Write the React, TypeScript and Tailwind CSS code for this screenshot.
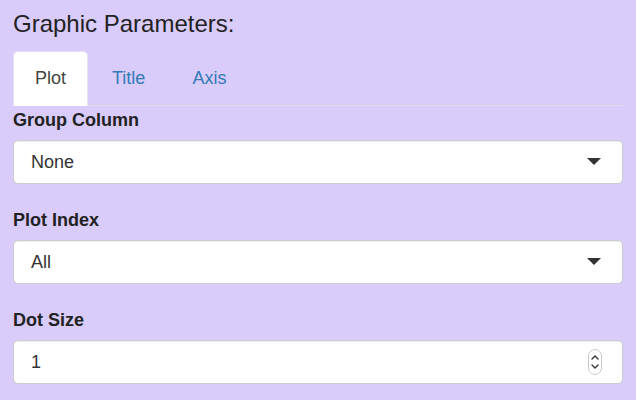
export default function App() {
  const tabs = ["Plot", "Title", "Axis"];

  const SelectBox = ({ value }: { value: string }) => (
    <div className="flex h-[44px] items-center justify-between rounded-[5px] border border-[#cccccc] bg-white pl-[17px] pr-[21px] text-[18px] text-[#333333] shadow-[inset_0_1px_1px_rgba(0,0,0,0.075)]">
      <span>{value}</span>
      <svg width="14" height="8" viewBox="0 0 14 8">
        <path d="M0 0 L14 0 L7 7 Z" fill="#333333" />
      </svg>
    </div>
  );

  return (
    <div className="h-[400px] w-[636px] overflow-hidden bg-[#d9ccfa] px-[13px] font-['Liberation_Sans',Arial,sans-serif] text-[#333333]">
      <div className="pt-[8px] text-[24px] leading-[32px] text-[#222222]">
        Graphic Parameters:
      </div>
      <ul className="mt-[11px] flex border-b border-[#dddddd]">
        {tabs.map((t, i) => (
          <li key={t} className="mr-[3px] -mb-px">
            <div
              className={
                i === 0
                  ? "flex h-[55px] items-center rounded-t-[5px] border border-b-transparent border-[#e6e0f5] bg-white px-[21px] text-[18px] text-[#444444]"
                  : "flex h-[55px] items-center border border-transparent pl-[20px] pr-[22px] text-[18px] text-[#337ab7]"
              }
            >
              {t}
            </div>
          </li>
        ))}
      </ul>

      <div className="mt-px">
        <div className="mb-[7px] text-[18px] font-bold leading-[26px] text-[#222222]">
          Group Column
        </div>
        <SelectBox value="None" />
      </div>

      <div className="mt-[23px]">
        <div className="mb-[7px] text-[18px] font-bold leading-[26px] text-[#222222]">
          Plot Index
        </div>
        <SelectBox value="All" />
      </div>

      <div className="mt-[23px]">
        <div className="mb-[7px] text-[18px] font-bold leading-[26px] text-[#222222]">
          Dot Size
        </div>
        <div className="flex h-[44px] items-center justify-between rounded-[5px] border border-[#cccccc] bg-white pl-[17px] pr-[20px] text-[18px] text-[#333333] shadow-[inset_0_1px_1px_rgba(0,0,0,0.075)]">
          <span>1</span>
          <svg width="14" height="26" viewBox="0 0 14 26">
            <rect x="0.5" y="0.5" width="13" height="25" rx="6.5" fill="#ffffff" stroke="#c8c8c8" />
            <path d="M4 10 L7 7 L10 10" fill="none" stroke="#333333" strokeWidth="1.4" strokeLinecap="round" strokeLinejoin="round" />
            <path d="M4 16 L7 19 L10 16" fill="none" stroke="#333333" strokeWidth="1.4" strokeLinecap="round" strokeLinejoin="round" />
          </svg>
        </div>
      </div>
    </div>
  );
}
